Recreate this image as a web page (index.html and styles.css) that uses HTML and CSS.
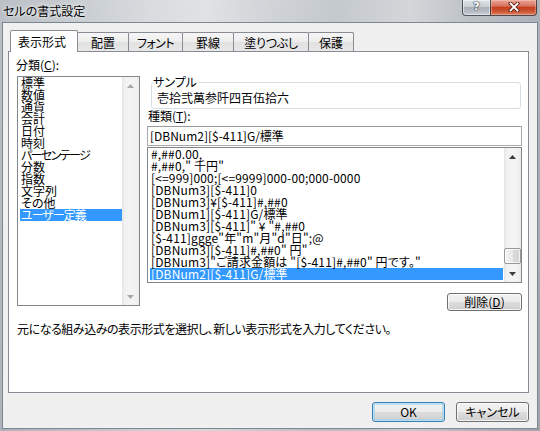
FILE: index.html
```html
<!DOCTYPE html>
<html lang="ja">
<head>
<meta charset="utf-8">
<title>セルの書式設定</title>
<link rel="stylesheet" href="styles.css">
</head>
<body>
<div class="window">
  <div class="titlebar">
    <div class="title">セルの書式設定</div>
    <div class="caption">
      <div class="cap help"><span class="qmark">?</span></div>
      <div class="cap close">
        <svg width="12" height="10" viewBox="0 0 12 10">
          <path d="M2.5 1.5 L9.5 8.5 M9.5 1.5 L2.5 8.5" stroke="#5a2418" stroke-width="3.6" stroke-linecap="square" fill="none"/>
          <path d="M2.5 1.5 L9.5 8.5 M9.5 1.5 L2.5 8.5" stroke="#ffffff" stroke-width="1.8" stroke-linecap="square" fill="none"/>
        </svg>
      </div>
    </div>
  </div>
  <div class="client">
    <div class="tabs">
      <div class="tab sel t1">表示形式</div>
      <div class="tab t2">配置</div>
      <div class="tab t3">フォント</div>
      <div class="tab t4">罫線</div>
      <div class="tab t5">塗りつぶし</div>
      <div class="tab t6">保護</div>
    </div>
    <div class="panel">
      <div class="row">
        <div class="leftcol">
          <div class="label">分類(<u>C</u>):</div>
          <div class="listbox cat">
            <div class="items">
              <div class="item">標準</div>
              <div class="item">数値</div>
              <div class="item">通貨</div>
              <div class="item">会計</div>
              <div class="item">日付</div>
              <div class="item">時刻</div>
              <div class="item kana">パーセンテージ</div>
              <div class="item">分数</div>
              <div class="item">指数</div>
              <div class="item">文字列</div>
              <div class="item">その他</div>
              <div class="item selected kana-s">ユーザー定義</div>
            </div>
            <div class="vscroll disabled">
              <div class="sbtn"><svg width="7" height="4" viewBox="0 0 7 4"><polygon points="3.5,0 7,4 0,4"/></svg></div>
              <div class="track"></div>
              <div class="sbtn"><svg width="7" height="4" viewBox="0 0 7 4"><polygon points="0,0 7,0 3.5,4"/></svg></div>
            </div>
          </div>
        </div>
        <div class="rightcol">
          <fieldset class="sample">
            <legend>サンプル</legend>
            <div class="sample-text">壱拾弐萬参阡四百伍拾六</div>
          </fieldset>
          <div class="label type-label">種類(<u>T</u>):</div>
          <div class="textbox">[DBNum2][$-411]G/標準</div>
          <div class="listbox types">
            <div class="items">
              <div class="item">#,##0.00,</div>
              <div class="item">#,##0," 千円"</div>
              <div class="item">[&lt;=999]000;[&lt;=9999]000-00;000-0000</div>
              <div class="item">[DBNum3][$-411]0</div>
              <div class="item">[DBNum3]¥[$-411]#,##0</div>
              <div class="item">[DBNum1][$-411]G/標準</div>
              <div class="item">[DBNum3][$-411]" ¥ "#,##0</div>
              <div class="item">[$-411]ggge"年"m"月"d"日";@</div>
              <div class="item">[DBNum3][$-411]#,##0" 円"</div>
              <div class="item">[DBNum3]"ご請求金額は "[$-411]#,##0" 円です。"</div>
              <div class="item selected">[DBNum2][$-411]G/標準</div>
            </div>
            <div class="vscroll">
              <div class="sbtn"><svg width="7" height="4" viewBox="0 0 7 4"><polygon points="3.5,0 7,4 0,4"/></svg></div>
              <div class="track"><div class="thumb"></div></div>
              <div class="sbtn"><svg width="7" height="4" viewBox="0 0 7 4"><polygon points="0,0 7,0 3.5,4"/></svg></div>
            </div>
          </div>
          <div class="btn del">削除(<u>D</u>)</div>
        </div>
      </div>
      <div class="desc">元になる組み込みの表示形式を選択し、新しい表示形式を入力してください。</div>
    </div>
    <div class="footer">
      <div class="btn ok">OK</div>
      <div class="btn cancel">キャンセル</div>
    </div>
  </div>
</div>
</body>
</html>
```

FILE: styles.css
```css
html, body {
  margin: 0;
  padding: 0;
}
body {
  width: 540px;
  height: 431px;
  overflow: hidden;
  font-family: "Noto Sans CJK JP", "Noto Sans", sans-serif;
  font-size: 12px;
  font-feature-settings: "palt";
  color: #000;
}
.window {
  width: 540px;
  height: 431px;
  display: flex;
  flex-direction: column;
  background:
    linear-gradient(180deg, rgba(255,255,255,0.10), rgba(0,0,0,0.03)),
    linear-gradient(90deg, #b3b9c0 0%, #c2c7cc 14%, #d5d8db 28%, #dddfe1 38%, #cbcfd3 50%, #bec3c8 62%, #cfd2d5 76%, #b6bbc1 87%, #a4aab1 100%);
}
.titlebar {
  height: 22px;
  display: flex;
  justify-content: space-between;
  align-items: flex-start;
}
.title {
  padding: 4px 0 0 3px;
  line-height: 14px;
  text-shadow: 0 0 5px rgba(255,255,255,0.9), 0 0 2px rgba(255,255,255,0.8);
}
.caption {
  display: flex;
  margin-right: 3px;
}
.cap {
  box-sizing: border-box;
  height: 16px;
  border: 1px solid rgba(45,52,60,0.8);
  border-top: none;
  display: flex;
  align-items: center;
  justify-content: center;
}
.help {
  width: 28px;
  border-right: none;
  border-radius: 0 0 0 4px;
  background: linear-gradient(180deg, #dfe3e7 0%, #c9ced3 45%, #aab0b7 50%, #b9bfc5 80%, #cdd2d6 100%);
  box-shadow: inset 0 0 0 1px rgba(255,255,255,0.45);
}
.qmark {
  font-family: "DejaVu Sans", sans-serif;
  font-weight: bold;
  font-size: 11px;
  line-height: 12px;
  color: #fff;
  text-shadow: 0 0 1px #38404a, 0 0 2px #38404a, 0 0 1px #38404a;
  margin-top: -2px;
}
.close {
  width: 47px;
  border-radius: 0 0 4px 0;
  background: linear-gradient(180deg, #e8a597 0%, #d9735f 40%, #c4401f 50%, #cc5331 75%, #de8366 100%);
  box-shadow: inset 0 0 0 1px rgba(255,220,210,0.35);
}
.close svg {
  display: block;
  margin-top: -2px;
}
.client {
  flex: 1;
  margin: 0 2px 2px 2px;
  border: 1px solid #7c8691;
  background: #f0f0f0;
  display: flex;
  flex-direction: column;
}
.tabs {
  display: flex;
  align-items: flex-end;
  height: 28px;
  padding-left: 7px;
}
.tab {
  box-sizing: border-box;
  height: 19px;
  border: 1px solid #898c95;
  border-bottom: none;
  margin-left: -1px;
  padding-top: 3px;
  line-height: 14px;
  text-align: center;
  border-radius: 2px 2px 0 0;
  background: linear-gradient(180deg, #f6f6f6 0%, #ededed 50%, #e1e1e1 51%, #e7e7e7 100%);
}
.tab.sel {
  height: 22px;
  margin-bottom: -1px;
  padding-top: 4px;
  background: #fff;
  position: relative;
  z-index: 1;
  text-align: left;
  padding-left: 7px;
}
.t1 { width: 68px; margin-left: 0; }
.t2 { width: 52px; }
.t3 { width: 55px; letter-spacing: -0.5px; }
.t4 { width: 52px; }
.t5 { width: 76px; letter-spacing: -0.3px; }
.t6 { width: 46px; }
.panel {
  box-sizing: border-box;
  height: 342px;
  margin: 0 8px 0 5px;
  border: 1px solid #898c95;
  background: #fff;
  padding: 7px 6px 0 7px;
}
.row {
  display: flex;
}
.leftcol {
  width: 124px;
}
.rightcol {
  width: 375px;
  margin-left: 7px;
  display: flex;
  flex-direction: column;
}
.label {
  line-height: 12px;
  white-space: nowrap;
}
.listbox {
  box-sizing: border-box;
  border: 1px solid #828790;
  background: #fff;
  display: flex;
}
.listbox .items {
  flex: 1;
  min-width: 0;
  padding-left: 2px;
}
.item {
  height: 12px;
  line-height: 12px;
  padding-left: 1px;
  white-space: nowrap;
}
.item.kana {
  letter-spacing: -1.6px;
}
.item.kana-s {
  letter-spacing: -1px;
}
.item.selected {
  background: #3399ff;
  color: #fff;
}
.cat {
  margin: 5px 0 0 1px;
  width: 123px;
  height: 230px;
}
.vscroll {
  width: 17px;
  flex: none;
  display: flex;
  flex-direction: column;
  background: linear-gradient(90deg, #e4e4e4 0%, #f1f1f1 15%, #f4f4f4 50%, #f1f1f1 85%, #e8e8e8 100%);
}
.sbtn {
  height: 17px;
  display: flex;
  align-items: center;
  justify-content: center;
}
.sbtn svg {
  display: block;
  fill: #3e3e3e;
}
.vscroll.disabled .sbtn svg {
  fill: #a8a8a8;
}
.track {
  flex: 1;
  display: flex;
  flex-direction: column;
  justify-content: flex-end;
}
.thumb {
  box-sizing: border-box;
  height: 16px;
  margin: 0 0 1px 0;
  border: 1px solid #979797;
  border-radius: 2px;
  background: linear-gradient(90deg, #f3f3f3 0%, #e9e9e9 50%, #d9d9d9 51%, #d3d3d3 100%);
  box-shadow: inset 0 0 0 1px rgba(255,255,255,0.7);
}
.sample {
  margin: 16px 1px 0 4px;
  padding: 2px 0 3px 6px;
  border: 1px solid #d5dfe5;
  border-radius: 3px;
  min-width: 0;
}
.sample legend {
  padding: 0 2px 0 0;
  margin-left: -5px;
  line-height: 14px;
}
.sample-text {
  line-height: 14px;
  margin-left: -1px;
}
.type-label {
  margin-top: 1px;
  padding-left: 1px;
}
.textbox {
  box-sizing: border-box;
  height: 20px;
  margin-top: 4px;
  border: 1px solid #a9a9a9;
  border-top-color: #9a9a9a;
  padding-left: 2px;
  line-height: 18px;
  background: #fff;
  white-space: nowrap;
}
.types {
  margin-top: 1px;
  height: 136px;
}
.types .items {
  padding-right: 1px;
  letter-spacing: 0.15px;
}
.btn {
  box-sizing: border-box;
  border: 1px solid #707070;
  border-radius: 3px;
  background: linear-gradient(180deg, #f2f2f2 0%, #ebebeb 50%, #dddddd 51%, #cfcfcf 100%);
  box-shadow: inset 0 0 0 1px rgba(255,255,255,0.75);
  text-align: center;
  white-space: nowrap;
}
.del {
  align-self: flex-end;
  margin-top: 10px;
  width: 75px;
  height: 18px;
  line-height: 16px;
}
.desc {
  margin: 12px 0 0 1px;
  line-height: 12px;
  white-space: nowrap;
  letter-spacing: -0.45px;
}
.footer {
  display: flex;
  justify-content: flex-end;
  gap: 11px;
  padding: 9px 8px 0 0;
}
.footer .btn {
  width: 73px;
  height: 20px;
  line-height: 18px;
}
.ok {
  border-color: #3c7fb1;
  box-shadow: inset 0 0 0 1px #b4e0f6, inset 0 0 0 2px rgba(140,205,240,0.5);
}
```
